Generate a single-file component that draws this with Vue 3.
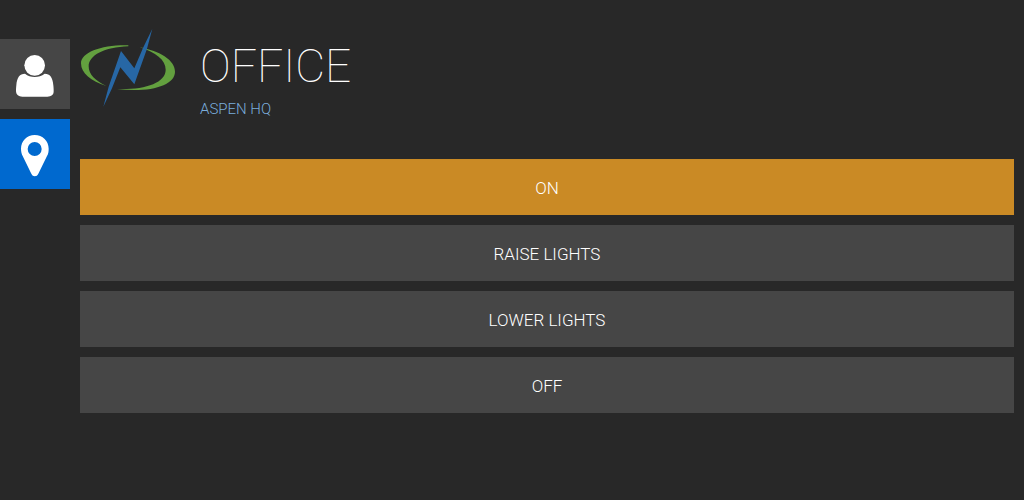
<script setup>
import { ref } from 'vue'

const scenes = ['ON', 'RAISE LIGHTS', 'LOWER LIGHTS', 'OFF']
const active = ref('ON')
</script>

<template>
  <div class="app">
    <nav class="rail" aria-label="Sections">
      <button class="tab" type="button" aria-label="User">
        <svg viewBox="0 0 210 210" aria-hidden="true">
          <circle cx="104" cy="79" r="31" />
          <path d="M75 104 C59 104 51 115 49 139 C48 148 48 153 48 157 C49 168 56 173 67 173 H142 C154 173 161 168 161 157 C161 153 161 148 160 139 C158 115 150 104 134 104 C117 117 91 117 75 104 Z" />
        </svg>
      </button>
      <button class="tab current" type="button" aria-label="Location" aria-current="page">
        <svg viewBox="0 0 210 210" aria-hidden="true">
          <path fill-rule="evenodd" d="M104 48 C81 48 63 66 63 89 C63 98 65 104 68 111 L94 164 C98 174 111 174 115 164 L141 111 C145 104 146 98 146 89 C146 66 128 48 104 48 Z M104 69 A21 21 0 1 1 104 111 A21 21 0 1 1 104 69 Z" />
        </svg>
      </button>
    </nav>
    <main>
      <header>
        <svg class="logo" viewBox="12 24 288 237" role="img" aria-label="Company logo">
          <path class="green" d="M157 76 C77 74 15 97 15 130 C15 160 45 183 91 198 C58 183 38 163 38 139 C38 106 85 82 157 79 Z" />
          <path class="green" d="M191 82 C252 93 297 121 297 155 C297 197 221 219 123 207 C205 210 269 189 269 149 C269 120 239 97 191 82 Z" />
          <path class="blue" d="M229 26 L213 86 L175 193 L133 142 L108 205 L82 260 L98 200 L135 93 L175 145 L201 84 Z" />
        </svg>
        <div class="heading">
          <h1>OFFICE</h1>
          <p>ASPEN HQ</p>
        </div>
      </header>
      <div class="scenes">
        <button
          v-for="scene in scenes"
          :key="scene"
          class="scene"
          :class="{ active: scene === active }"
          type="button"
          :aria-pressed="scene === active"
          @click="active = scene"
        >{{ scene }}</button>
      </div>
    </main>
  </div>
</template>

<style>
body {
  background: #282828;
}
</style>

<style scoped>
.app {
  display: flex;
  gap: 10px;
  min-height: 100vh;
  box-sizing: border-box;
  padding-right: 10px;
  color: #fff;
  font-family: Roboto, sans-serif;
  font-weight: 300;
}
button {
  border: 0;
  border-radius: 0;
  padding: 0;
  color: inherit;
  font: inherit;
  cursor: pointer;
}
.rail {
  flex: none;
  display: flex;
  flex-direction: column;
  gap: 10px;
  padding-top: 39px;
}
.tab {
  width: 70px;
  height: 70px;
  background: #464646;
}
.tab.current {
  background: #0069cf;
}
.tab svg {
  display: block;
  width: 70px;
  height: 70px;
  fill: #fff;
}
main {
  flex: 1;
  min-width: 0;
}
header {
  display: flex;
  gap: 24px;
  padding: 28px 0 40px;
}
.logo {
  flex: none;
  width: 96px;
  height: 79px;
}
.green {
  fill: #63a03f;
}
.blue {
  fill: #2767a5;
}
.heading {
  padding-top: 10px;
}
h1 {
  margin: 0;
  font-size: 46px;
  line-height: 56px;
  font-weight: 100;
}
p {
  margin: 5px 0 0;
  font-size: 15px;
  line-height: 20px;
  color: #7aaddc;
}
.scenes {
  display: flex;
  flex-direction: column;
  gap: 10px;
}
.scene {
  padding: 19px 0 17px;
  background: #464646;
  font-size: 17px;
  line-height: 20px;
}
.scene.active {
  background: #ca8a25;
}
</style>
